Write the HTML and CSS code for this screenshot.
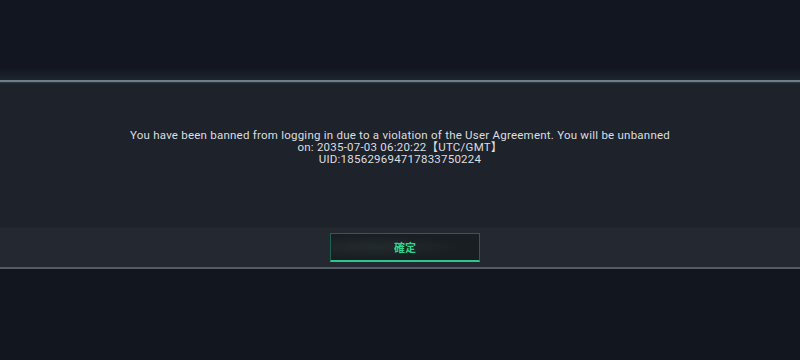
FILE: index.html
```html
<!DOCTYPE html>
<html>
<head>
<meta charset="utf-8">
<link rel="stylesheet" href="styles.css">
</head>
<body>
<div class="page">
  <div class="top"></div>
  <div class="rule-top"></div>
  <div class="panel">
    <div class="message">
      <p>You have been banned from logging in due to a violation of the User Agreement. You will be unbanned</p>
      <p>on: 2035-07-03 06:20:22【UTC/GMT】</p>
      <p>UID:185629694717833750224</p>
    </div>
  </div>
  <div class="actions">
    <button class="confirm">確定</button>
  </div>
  <div class="rule-bottom"></div>
  <div class="bottom"></div>
</div>
</body>
</html>
```
FILE: styles.css
```css
html, body {
  margin: 0;
  padding: 0;
  background: #12161e;
}
.page {
  width: 800px;
  height: 360px;
  display: flex;
  flex-direction: column;
  font-family: Roboto, "Noto Sans CJK TC", sans-serif;
}
.top {
  height: 80px;
  background: linear-gradient(to bottom, #121620 0px, #121620 68px, #1e2530 80px);
}
.rule-top {
  height: 4px;
  background: linear-gradient(to bottom, #6e7e8a 0, #6e7e8a 2px, #2a3638 2px, #2a3638 3px, #1f2a2c 3px);
}
.panel {
  height: 143px;
  background: #1e222a;
  display: flex;
  justify-content: center;
  padding-top: 45px;
  box-sizing: border-box;
}
.message {
  color: #dcdee0;
  font-size: 11.5px;
  line-height: 12px;
  text-align: center;
  letter-spacing: 0.23px;
}
.message p {
  margin: 0;
}
.actions {
  height: 40px;
  background: #242830;
  display: flex;
  justify-content: center;
  align-items: flex-start;
  padding-top: 5px;
  box-sizing: border-box;
  border-top: 1px solid #20242c;
}
.confirm {
  width: 150px;
  height: 29px;
  margin-left: 10px;
  background: radial-gradient(ellipse at 30% 50%, #232a2c 0%, #191e22 60%), #191e22;
  border: 1px solid #1e6450;
  border-bottom: 2px solid #2ec48c;
  color: #2fd48e;
  font-family: "Noto Sans CJK TC", sans-serif;
  font-size: 11px;
  font-weight: bold;
  padding: 0;
  box-sizing: border-box;
}
.rule-bottom {
  height: 2px;
  background: #565b63;
}
.bottom {
  flex: 1;
  background: #12161e;
}
```
